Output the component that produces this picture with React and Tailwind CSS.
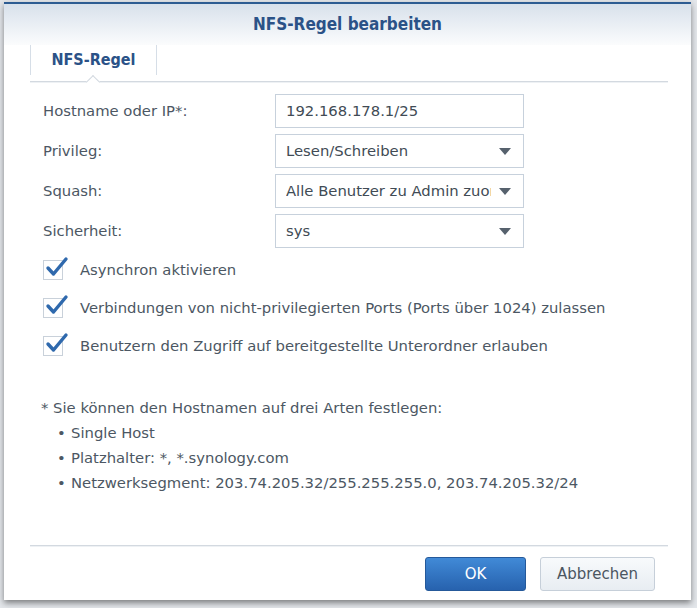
// NFS rule edit dialog (Synology DSM style)

const font = { fontFamily: '"DejaVu Sans", "Liberation Sans", sans-serif' }
const titleFont = { fontFamily: '"DejaVu Sans Condensed", "DejaVu Sans", sans-serif' }

function TextField({ value }) {
  return (
    <div className="w-[249px] h-[34px] border border-[#c7d1dc] bg-white flex items-center pl-[10px] text-[14.8px] text-[#414b55]">
      {value}
    </div>
  )
}

function SelectField({ value }) {
  return (
    <div className="w-[249px] h-[34px] border border-[#c7d1dc] bg-white flex items-center pl-[10px] pr-[12px] text-[14.8px] text-[#414b55]">
      <span className="flex-1 overflow-hidden whitespace-nowrap">{value}</span>
      <svg width="12" height="7" viewBox="0 0 12 7" className="ml-2 shrink-0">
        <polygon points="0,0 12,0 6,7" fill="#56616d" />
      </svg>
    </div>
  )
}

function FormRow({ label, children }) {
  return (
    <div className="flex items-center h-[34px] mb-[6px]">
      <div className="w-[245px] pl-[13px] text-[14.8px] text-[#4c5763]">{label}</div>
      {children}
    </div>
  )
}

function Check({ label }) {
  return (
    <div className="flex items-center h-[38px] pl-[13px]">
      <div className="relative w-[20px] h-[20px] border border-[#c9d1da] bg-white shrink-0">
        <svg width="24" height="24" viewBox="0 0 24 24" className="absolute -top-[6px] left-[1px]">
          <path d="M3 13 L8.5 19 L21 4" fill="none" stroke="#2f69ad" strokeWidth="3.4" strokeLinecap="round" strokeLinejoin="round" />
        </svg>
      </div>
      <span className="ml-[17px] text-[14.8px] text-[#4c5763] whitespace-nowrap">{label}</span>
    </div>
  )
}

function Bullet({ children }) {
  return (
    <div className="flex items-center h-[25px] pl-[16px]">
      <span className="w-[14px] text-[#4c5763]">•</span>
      <span>{children}</span>
    </div>
  )
}

export default function App() {
  return (
    <div className="w-[697px] h-[608px] bg-[#e3e6ea] overflow-hidden" style={font}>
      <div className="ml-[4px] mt-[2px] w-[687px] h-[598px] bg-white border-t-2 border-[#2d5c92] shadow-[0_3px_6px_rgba(0,0,0,0.45)] flex flex-col">
        {/* Title bar */}
        <div className="h-[41px] shrink-0 flex items-center justify-center bg-gradient-to-b from-[#d8e1eb] to-[#fbfcfd]">
          <span className="text-[17px] font-bold text-[#2b5287]" style={titleFont}>NFS-Regel bearbeiten</span>
        </div>

        <div className="flex-1 flex flex-col pl-[26px] pr-[23px]">
          {/* Tab strip */}
          <div className="relative h-[37px] shrink-0 border-b border-[#d3d9e0] shadow-[0_1px_0_#eef1f4]">
            <div className="w-[127px] h-[30px] border-l border-r border-[#d6dee7] flex items-center justify-center text-[16px] font-bold text-[#2b5287]" style={titleFont}>
              NFS-Regel
            </div>
            <div className="absolute left-[58px] -bottom-[6px] w-[10px] h-[10px] bg-white border-l border-t border-[#d3d9e0] rotate-45" />
          </div>

          {/* Form */}
          <div className="pt-[12px]">
            <FormRow label="Hostname oder IP*:">
              <TextField value="192.168.178.1/25" />
            </FormRow>
            <FormRow label="Privileg:">
              <SelectField value="Lesen/Schreiben" />
            </FormRow>
            <FormRow label="Squash:">
              <SelectField value="Alle Benutzer zu Admin zuordnen" />
            </FormRow>
            <FormRow label="Sicherheit:">
              <SelectField value="sys" />
            </FormRow>
          </div>

          <div className="-mt-[3px]">
            <Check label="Asynchron aktivieren" />
            <Check label="Verbindungen von nicht-privilegierten Ports (Ports über 1024) zulassen" />
            <Check label="Benutzern den Zugriff auf bereitgestellte Unterordner erlauben" />
          </div>

          {/* Hostname note */}
          <div className="mt-[31px] pl-[11px] text-[14.8px] text-[#4c5763]">
            <div className="h-[25px] flex items-center">* Sie können den Hostnamen auf drei Arten festlegen:</div>
            <Bullet>Single Host</Bullet>
            <Bullet>Platzhalter: *, *.synology.com</Bullet>
            <Bullet>Netzwerksegment: 203.74.205.32/255.255.255.0, 203.74.205.32/24</Bullet>
          </div>

          <div className="flex-1" />

          {/* Footer */}
          <div className="h-[46px] shrink-0 border-t border-[#d3d9e0] shadow-[inset_0_1px_0_#eef1f4] flex items-start justify-end pt-[11px] pr-[13px] gap-[14px]">
            <button className="w-[101px] h-[34px] rounded-[3px] border border-[#25599a] bg-gradient-to-b from-[#418ad7] to-[#2762ae] text-white text-[15px]">
              OK
            </button>
            <button className="w-[115px] h-[34px] rounded-[3px] border border-[#c6cfd9] bg-gradient-to-b from-[#f8fafc] to-[#e8edf2] text-[#4b5661] text-[15px]">
              Abbrechen
            </button>
          </div>
        </div>
        <div className="h-[9px] shrink-0" />
      </div>
    </div>
  )
}
